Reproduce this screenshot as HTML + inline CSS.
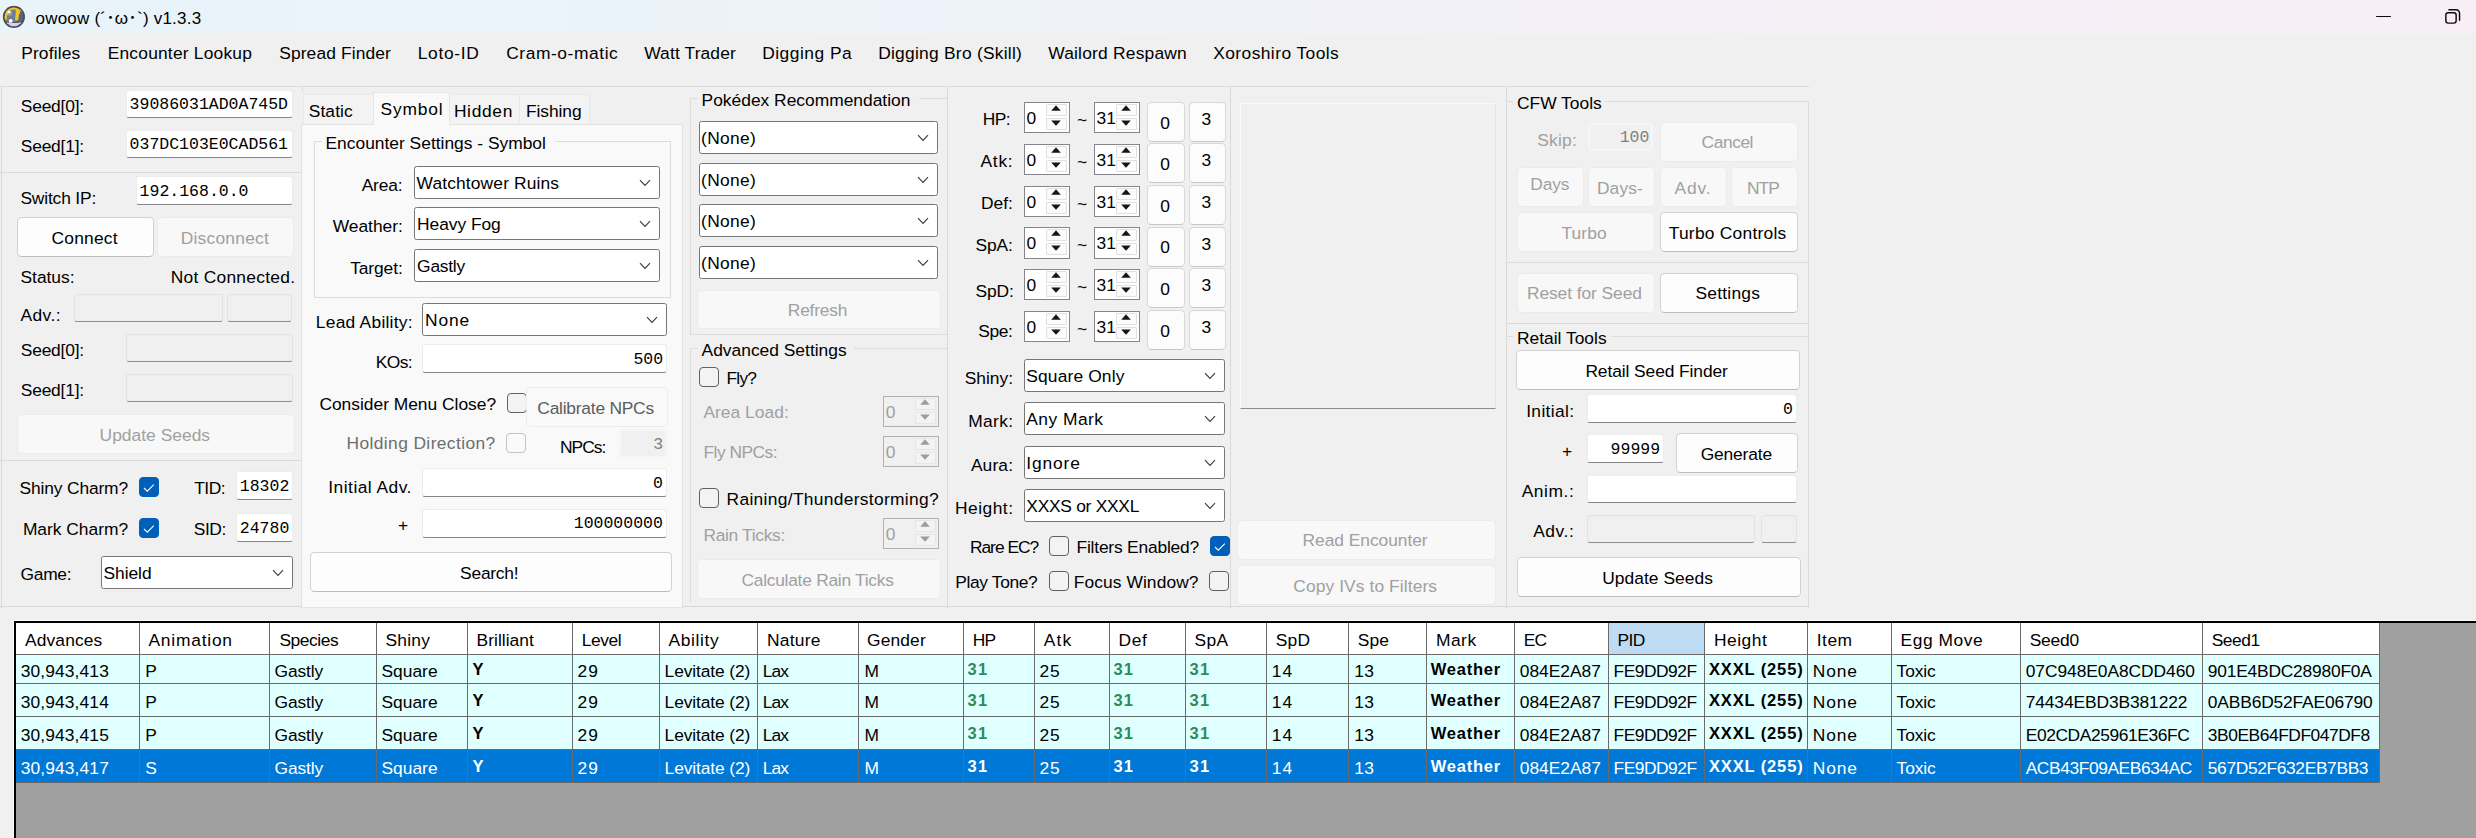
<!DOCTYPE html>
<html lang="en"><head><meta charset="utf-8"><title>owoow v1.3.3</title>
<style>
html,body{margin:0;padding:0;}
body{width:2476px;height:838px;overflow:hidden;background:#f0f0f0;position:relative;font-family:"Liberation Sans","Noto Sans CJK JP",sans-serif;font-size:17.4px;color:#000;}
body>div,.abs{position:absolute;box-sizing:border-box;}
.t,.m{line-height:24px;height:24px;white-space:nowrap;}
.m{font-family:"Liberation Mono",monospace;font-size:16.5px;}
.titlebar{left:0;top:0;width:2476px;height:34px;background:linear-gradient(90deg,#e8f4f9 0%,#ecf3f9 35%,#f4f0f7 65%,#f9eef6 100%);}
.tb{background:#fff;border:1px solid #ececec;border-bottom:1px solid #868686;border-radius:3px;}
.tb.flat{background:#f0f0f0;border:1px solid #f3f3f3;box-shadow:inset 0 0 0 1px #f9f9f9;border-radius:3px;}
.tb.dis{background:#f0f0f0;border-color:#e2e2e2;border-bottom-color:#8e8e8e;}
.cb{background:#fff;border:1px solid #767676;border-radius:2.5px;}
.cb .chev{position:absolute;right:7.6px;top:50%;margin-top:-3.2px;}
.bt{background:#fdfdfd;border:1px solid #d2d2d2;border-bottom-color:#bdbdbd;border-radius:4.5px;}
.bt.dis{background:#f8f8f8;border-color:#ebebeb;}
.bt.dis.onpane{background:#f9f9f9;border-color:#ececec;}
.bt.lt{background:#fcfcfc;border-color:#d8d8d8;border-bottom-color:#c8c8c8;}
.ck{border:1px solid #616161;border-radius:4px;background:#f3f3f3;}
.ck.on{background:#005fb8;border-color:#005fb8;}
.ck.on svg{position:absolute;left:-1px;top:-1px;}
.ck.cdis{border-color:#c3c3c3;background:#fafafa;}
.sp{border:1px solid #7a7a7a;background:#fff;}
.sb{position:absolute;background:#fcfcfc;border:1px solid #e0e0e0;border-radius:1px;box-sizing:border-box;overflow:hidden;}
.sb svg{margin:-1px 0 0 -1px;}
.gb{border:1px solid #dcdcdc;}
.pane{background:#f9f9f9;border:1px solid #e3e3e3;}
.tab{background:#f3f3f3;border:1px solid #e9e9e9;border-bottom:none;}
.tab.sel{background:#f9f9f9;border-color:#e6e6e6;}
.pic{background:#f0f0f0;border:1px solid #fafafa;border-right-color:#e6e6e6;border-bottom:1px solid #8c8c8c;}
.grid{background:#a0a0a0;border-top:2px solid #000;border-left:2px solid #000;}
.hd{background:#fff;}
.hdsel{background:#bddcf4;}
.rw{background:#e0ffff;}
.rsel{background:#0078d7;}
</style></head>
<body>
<div class="titlebar"></div>
<svg class="abs" style="left:1px;top:4px" width="26" height="26" viewBox="0 0 26 26">
<defs><clipPath id="bc"><circle cx="12.9" cy="12.85" r="9.3"/></clipPath></defs>
<circle cx="12.9" cy="12.85" r="11.9" fill="#f4fafc"/>
<circle cx="12.9" cy="12.85" r="11.1" fill="#4b4e53"/>
<g clip-path="url(#bc)">
<rect x="0" y="0" width="26" height="26" fill="#6c7f91"/>
<path d="M18.4 5 L26 5 L26 20 L17.2 20 Z" fill="#56656f"/>
<path d="M2 16.4 C2 7 6 3 13 3 C17.5 3 21 4.8 23.6 8.4 L21 8.4 C18.8 6 16.4 5.4 13 5.4 C8.4 5.4 6 8.6 5.6 16.4 Z" fill="#f3c41f"/>
<path d="M14.8 5 L18.6 5.4 L19 9 L17.8 11.2 L17.2 16 L14 16.4 L14.6 10.8 Z" fill="#f3c41f"/>
<path d="M0 14.8 C7 18.6 19 18.6 26 14.8 L26 19 L0 19 Z" fill="#4f5b65"/>
<path d="M0 16.6 C7 19.8 19 19.8 26 16.6 L26 26 L0 26 Z" fill="#dccbf4"/>
<path d="M3 20.8 C8 24 18 24 23 20.8 L20 23.6 L6 23.6 Z" fill="#b7a7d2"/>
<circle cx="9.7" cy="16.9" r="1.95" fill="#fff"/>
<ellipse cx="8.1" cy="8.1" rx="1.5" ry="1.3" fill="#fff"/>
<ellipse cx="8.6" cy="9.2" rx="2.6" ry="2.6" fill="#fff" opacity=".25"/>
</g></svg>
<div class="t" style="top:7px;left:35.5px;font-size:17px;letter-spacing:0.21px;">owoow (´･ω･`) v1.3.3</div>
<div class="ln" style="left:2376px;top:15.9px;width:15.2px;height:1.35px;background:#0c0c0c;border-radius:1px"></div>
<svg class="abs" style="left:2443px;top:7px" width="20" height="20" viewBox="0 0 20 20">
<rect x="2.85" y="5.8" width="10.3" height="10.3" rx="2.3" fill="none" stroke="#0c0c0c" stroke-width="1.45"/>
<path d="M5.9 2.7 H13 A3.55 3.55 0 0 1 16.55 6.25 V13.2" fill="none" stroke="#0c0c0c" stroke-width="1.45" stroke-linecap="round"/></svg>
<div class="t" style="top:41px;left:21.2px;letter-spacing:0.14px;">Profiles</div>
<div class="t" style="top:41px;left:107.7px;letter-spacing:0.2px;">Encounter Lookup</div>
<div class="t" style="top:41px;left:279.2px;letter-spacing:0.12px;">Spread Finder</div>
<div class="t" style="top:41px;left:417.7px;letter-spacing:0.68px;">Loto-ID</div>
<div class="t" style="top:41px;left:506.2px;letter-spacing:0.57px;">Cram-o-matic</div>
<div class="t" style="top:41px;left:644.2px;letter-spacing:0.14px;">Watt Trader</div>
<div class="t" style="top:41px;left:762.2px;letter-spacing:0.5px;">Digging Pa</div>
<div class="t" style="top:41px;left:878.2px;letter-spacing:0.25px;">Digging Bro (Skill)</div>
<div class="t" style="top:41px;left:1048.2px;letter-spacing:0.21px;">Wailord Respawn</div>
<div class="t" style="top:41px;left:1213.2px;letter-spacing:0.43px;">Xoroshiro Tools</div>
<div class="ln" style="left:0px;top:86px;width:1809px;height:1px;background:#dadada"></div>
<div class="ln" style="left:1px;top:86px;width:1px;height:522px;background:#dadada"></div>
<div class="ln" style="left:0px;top:172px;width:303px;height:1px;background:#dadada"></div>
<div class="ln" style="left:0px;top:460px;width:303px;height:1px;background:#dadada"></div>
<div class="ln" style="left:302px;top:86px;width:1px;height:6px;background:#dadada"></div>
<div class="ln" style="left:0px;top:606px;width:1809px;height:1px;background:#dadada"></div>
<div class="t" style="top:94px;left:20.8px;letter-spacing:-0.21px;">Seed[0]:</div>
<div class="tb" style="left:126px;top:90px;width:167px;height:28px;"></div>
<div class="m" style="top:93px;left:129.6px;color:#000;">39086031AD0A745D</div>
<div class="t" style="top:134px;left:20.8px;letter-spacing:-0.21px;">Seed[1]:</div>
<div class="tb" style="left:126px;top:130px;width:167px;height:28px;"></div>
<div class="m" style="top:133px;left:129.6px;color:#000;">037DC103E0CAD561</div>
<div class="t" style="top:186px;left:20.4px;letter-spacing:-0.16px;">Switch IP:</div>
<div class="tb" style="left:136px;top:176px;width:157px;height:29px;"></div>
<div class="m" style="top:180px;left:139.6px;color:#000;">192.168.0.0</div>
<div class="bt " style="left:17px;top:217px;width:137px;height:40px;"></div>
<div class="t" style="top:226px;left:51.6px;color:#000;letter-spacing:0.19px;">Connect</div>
<div class="bt dis " style="left:157px;top:217px;width:137px;height:40px;"></div>
<div class="t" style="top:226px;left:180.7px;color:#a0a0a0;letter-spacing:0.23px;">Disconnect</div>
<div class="t" style="top:265px;left:20.5px;letter-spacing:-0.02px;">Status:</div>
<div class="t" style="top:265px;left:170.7px;letter-spacing:0.27px;">Not Connected.</div>
<div class="t" style="top:303px;left:20.5px;letter-spacing:0.41px;">Adv.:</div>
<div class="tb dis" style="left:74px;top:294px;width:149px;height:28px;"></div>
<div class="tb dis" style="left:227px;top:294px;width:65px;height:28px;"></div>
<div class="t" style="top:338px;left:20.8px;letter-spacing:-0.21px;">Seed[0]:</div>
<div class="tb dis" style="left:126px;top:334px;width:167px;height:28px;"></div>
<div class="t" style="top:378px;left:20.8px;letter-spacing:-0.21px;">Seed[1]:</div>
<div class="tb dis" style="left:126px;top:374px;width:167px;height:28px;"></div>
<div class="bt dis " style="left:17px;top:414px;width:278px;height:40px;"></div>
<div class="t" style="top:423px;left:99.6px;color:#a0a0a0;letter-spacing:0.02px;">Update Seeds</div>
<div class="t" style="top:476px;left:19.6px;letter-spacing:-0.15px;">Shiny Charm?</div>
<div class="ck on" style="left:139px;top:477px;width:20px;height:20px;"><svg width="20" height="20" viewBox="0 0 20 20"><path d="M5 11 L8.3 14.2 L14.8 7.6" fill="none" stroke="#fff" stroke-width="1.05"/></svg></div>
<div class="t" style="top:476px;left:194.3px;letter-spacing:-0.55px;">TID:</div>
<div class="tb" style="left:236px;top:471px;width:57px;height:29px;"></div>
<div class="m" style="top:475px;left:239.8px;color:#000;">18302</div>
<div class="t" style="top:517px;left:22.9px;letter-spacing:-0.01px;">Mark Charm?</div>
<div class="ck on" style="left:139px;top:518px;width:20px;height:20px;"><svg width="20" height="20" viewBox="0 0 20 20"><path d="M5 11 L8.3 14.2 L14.8 7.6" fill="none" stroke="#fff" stroke-width="1.05"/></svg></div>
<div class="t" style="top:517px;left:193.8px;letter-spacing:-0.44px;">SID:</div>
<div class="tb" style="left:236px;top:513px;width:57px;height:29px;"></div>
<div class="m" style="top:517px;left:239.8px;color:#000;">24780</div>
<div class="t" style="top:562px;left:20.6px;letter-spacing:-0.33px;">Game:</div>
<div class="cb" style="left:101px;top:556px;width:192px;height:33px;"><svg class="chev" width="12" height="8" viewBox="0 0 12 8"><path d="M1 1.2 L6 6.4 L11 1.2" fill="none" stroke="#3c3c3c" stroke-width="1.15"/></svg></div>
<div class="t" style="top:561px;left:103.6px;letter-spacing:-0.07px;">Shield</div>
<div class="pane" style="left:301px;top:124px;width:382px;height:484px;"></div>
<div class="tab" style="left:303px;top:94px;width:72px;height:30px;"></div>
<div class="tab" style="left:449px;top:94px;width:71px;height:30px;"></div>
<div class="tab" style="left:519px;top:94px;width:71px;height:30px;"></div>
<div class="tab sel" style="left:373px;top:92px;width:77px;height:33px;"></div>
<div class="t" style="top:99px;left:308.7px;letter-spacing:0.12px;">Static</div>
<div class="t" style="top:97px;left:380.6px;letter-spacing:0.8px;">Symbol</div>
<div class="t" style="top:99px;left:453.9px;letter-spacing:0.66px;">Hidden</div>
<div class="t" style="top:99px;left:526px;letter-spacing:-0.08px;">Fishing</div>
<div class="gb" style="left:314px;top:141px;width:357px;height:157px;"></div>
<div class="ln" style="left:321.5px;top:140.2px;width:234.4px;height:3px;background:#f9f9f9"></div>
<div class="t" style="top:131px;left:325.5px;">Encounter Settings - Symbol</div>
<div class="t" style="top:173px;left:361.7px;letter-spacing:-0.17px;">Area:</div>
<div class="cb" style="left:414px;top:166px;width:246px;height:33px;"><svg class="chev" width="12" height="8" viewBox="0 0 12 8"><path d="M1 1.2 L6 6.4 L11 1.2" fill="none" stroke="#3c3c3c" stroke-width="1.15"/></svg></div>
<div class="t" style="top:171px;left:416.5px;letter-spacing:0.14px;">Watchtower Ruins</div>
<div class="t" style="top:214px;left:332.8px;letter-spacing:-0.04px;">Weather:</div>
<div class="cb" style="left:414px;top:207px;width:246px;height:33px;"><svg class="chev" width="12" height="8" viewBox="0 0 12 8"><path d="M1 1.2 L6 6.4 L11 1.2" fill="none" stroke="#3c3c3c" stroke-width="1.15"/></svg></div>
<div class="t" style="top:212px;left:417.1px;letter-spacing:-0.05px;">Heavy Fog</div>
<div class="t" style="top:256px;left:350.2px;letter-spacing:-0.1px;">Target:</div>
<div class="cb" style="left:414px;top:249px;width:246px;height:33px;"><svg class="chev" width="12" height="8" viewBox="0 0 12 8"><path d="M1 1.2 L6 6.4 L11 1.2" fill="none" stroke="#3c3c3c" stroke-width="1.15"/></svg></div>
<div class="t" style="top:254px;left:417.1px;letter-spacing:-0.24px;">Gastly</div>
<div class="t" style="top:310px;left:315.8px;letter-spacing:0.25px;">Lead Ability:</div>
<div class="cb" style="left:422px;top:303px;width:245px;height:33px;"><svg class="chev" width="12" height="8" viewBox="0 0 12 8"><path d="M1 1.2 L6 6.4 L11 1.2" fill="none" stroke="#3c3c3c" stroke-width="1.15"/></svg></div>
<div class="t" style="top:308px;left:425.1px;letter-spacing:0.81px;">None</div>
<div class="t" style="top:350px;left:375.8px;letter-spacing:-0.62px;">KOs:</div>
<div class="tb" style="left:422px;top:344px;width:245px;height:29px;"></div>
<div class="m" style="top:348px;left:63.1px;width:600px;text-align:right;color:#000;">500</div>
<div class="t" style="top:392px;left:319.4px;letter-spacing:-0.01px;">Consider Menu Close?</div>
<div class="ck" style="left:507px;top:393px;width:20px;height:20px;"></div>
<div class="bt dis onpane" style="left:526px;top:387px;width:142px;height:40px;"></div>
<div class="t" style="top:396px;left:537.3px;color:#5d5d5d;letter-spacing:-0.23px;">Calibrate NPCs</div>
<div class="t" style="top:431px;left:346.5px;color:#6d6d6d;letter-spacing:0.39px;">Holding Direction?</div>
<div class="ck cdis" style="left:506px;top:433px;width:20px;height:20px;"></div>
<div class="t" style="top:435px;left:559.9px;letter-spacing:-0.94px;">NPCs:</div>
<div class="tb flat" style="left:619px;top:429px;width:48px;height:29px;"></div>
<div class="m" style="top:433px;left:63.2px;width:600px;text-align:right;color:#808080;">3</div>
<div class="t" style="top:475px;left:328.3px;letter-spacing:0.47px;">Initial Adv.</div>
<div class="tb" style="left:422px;top:468px;width:245px;height:29px;"></div>
<div class="m" style="top:472px;left:62.9px;width:600px;text-align:right;color:#000;">0</div>
<div class="t" style="top:513px;left:103px;width:600px;text-align:center;">+</div>
<div class="tb" style="left:422px;top:509px;width:245px;height:29px;"></div>
<div class="m" style="top:512px;left:62.9px;width:600px;text-align:right;color:#000;">100000000</div>
<div class="bt " style="left:310px;top:552px;width:362px;height:40px;"></div>
<div class="t" style="top:561px;left:460.1px;color:#000;letter-spacing:-0.24px;">Search!</div>
<div class="gb" style="left:690px;top:98px;width:258px;height:237px;border-right:none;"></div>
<div class="ln" style="left:697.6px;top:97.6px;width:221.2px;height:3px;background:#f0f0f0"></div>
<div class="t" style="top:88px;left:701.6px;">Pokédex Recommendation</div>
<div class="cb" style="left:699px;top:121px;width:239px;height:33px;"><svg class="chev" width="12" height="8" viewBox="0 0 12 8"><path d="M1 1.2 L6 6.4 L11 1.2" fill="none" stroke="#3c3c3c" stroke-width="1.15"/></svg></div>
<div class="t" style="top:126px;left:701.1px;letter-spacing:0.33px;">(None)</div>
<div class="cb" style="left:699px;top:163px;width:239px;height:33px;"><svg class="chev" width="12" height="8" viewBox="0 0 12 8"><path d="M1 1.2 L6 6.4 L11 1.2" fill="none" stroke="#3c3c3c" stroke-width="1.15"/></svg></div>
<div class="t" style="top:168px;left:701.1px;letter-spacing:0.33px;">(None)</div>
<div class="cb" style="left:699px;top:204px;width:239px;height:33px;"><svg class="chev" width="12" height="8" viewBox="0 0 12 8"><path d="M1 1.2 L6 6.4 L11 1.2" fill="none" stroke="#3c3c3c" stroke-width="1.15"/></svg></div>
<div class="t" style="top:209px;left:701.1px;letter-spacing:0.33px;">(None)</div>
<div class="cb" style="left:699px;top:246px;width:239px;height:33px;"><svg class="chev" width="12" height="8" viewBox="0 0 12 8"><path d="M1 1.2 L6 6.4 L11 1.2" fill="none" stroke="#3c3c3c" stroke-width="1.15"/></svg></div>
<div class="t" style="top:251px;left:701.1px;letter-spacing:0.33px;">(None)</div>
<div class="bt dis " style="left:697px;top:290px;width:244px;height:39px;"></div>
<div class="t" style="top:298px;left:787.8px;color:#a0a0a0;letter-spacing:-0.22px;">Refresh</div>
<div class="gb" style="left:690px;top:348px;width:258px;height:254px;border-right:none;border-bottom:none;"></div>
<div class="ln" style="left:697.6px;top:347.4px;width:156px;height:3px;background:#f0f0f0"></div>
<div class="t" style="top:338px;left:701.6px;">Advanced Settings</div>
<div class="ck" style="left:699px;top:367px;width:20px;height:20px;"></div>
<div class="t" style="top:366px;left:726.6px;letter-spacing:-0.85px;">Fly?</div>
<div class="t" style="top:400px;left:703.4px;color:#a0a0a0;letter-spacing:0.03px;">Area Load:</div>
<div class="sp" style="left:883px;top:396px;width:56px;height:31px;border-color:#b0b0b5;background:#f0f0f0;"><div class="sb" style="left:31px;top:1px;width:21px;height:12px;background:#f3f3f3;border-color:#e6e6e6;"><svg width="21" height="12" viewBox="0 0 21 12" style="position:absolute;left:0;top:0"><path d="M5.2 6.7 L10 1.3 L14.8 6.7 Z" fill="#9c9c9c"/></svg></div><div class="sb" style="left:31px;top:14.5px;width:21px;height:12px;background:#f3f3f3;border-color:#e6e6e6;"><svg width="21" height="12" viewBox="0 0 21 12" style="position:absolute;left:0;top:0"><path d="M5.2 2.4 L10 7.8 L14.8 2.4 Z" fill="#9c9c9c"/></svg></div></div>
<div class="t" style="top:400px;left:885.7px;color:#a0a0a0;">0</div>
<div class="t" style="top:440px;left:703.4px;color:#a0a0a0;letter-spacing:-0.5px;">Fly NPCs:</div>
<div class="sp" style="left:883px;top:436px;width:56px;height:31px;border-color:#b0b0b5;background:#f0f0f0;"><div class="sb" style="left:31px;top:1px;width:21px;height:12px;background:#f3f3f3;border-color:#e6e6e6;"><svg width="21" height="12" viewBox="0 0 21 12" style="position:absolute;left:0;top:0"><path d="M5.2 6.7 L10 1.3 L14.8 6.7 Z" fill="#9c9c9c"/></svg></div><div class="sb" style="left:31px;top:14.5px;width:21px;height:12px;background:#f3f3f3;border-color:#e6e6e6;"><svg width="21" height="12" viewBox="0 0 21 12" style="position:absolute;left:0;top:0"><path d="M5.2 2.4 L10 7.8 L14.8 2.4 Z" fill="#9c9c9c"/></svg></div></div>
<div class="t" style="top:440px;left:885.7px;color:#a0a0a0;">0</div>
<div class="ck" style="left:699px;top:488px;width:20px;height:20px;"></div>
<div class="t" style="top:487px;left:726.6px;letter-spacing:0.31px;">Raining/Thunderstorming?</div>
<div class="t" style="top:523px;left:703.4px;color:#a0a0a0;letter-spacing:-0.31px;">Rain Ticks:</div>
<div class="sp" style="left:883px;top:518px;width:56px;height:31px;border-color:#b0b0b5;background:#f0f0f0;"><div class="sb" style="left:31px;top:1px;width:21px;height:12px;background:#f3f3f3;border-color:#e6e6e6;"><svg width="21" height="12" viewBox="0 0 21 12" style="position:absolute;left:0;top:0"><path d="M5.2 6.7 L10 1.3 L14.8 6.7 Z" fill="#9c9c9c"/></svg></div><div class="sb" style="left:31px;top:14.5px;width:21px;height:12px;background:#f3f3f3;border-color:#e6e6e6;"><svg width="21" height="12" viewBox="0 0 21 12" style="position:absolute;left:0;top:0"><path d="M5.2 2.4 L10 7.8 L14.8 2.4 Z" fill="#9c9c9c"/></svg></div></div>
<div class="t" style="top:522px;left:885.7px;color:#a0a0a0;">0</div>
<div class="bt dis " style="left:697px;top:559px;width:244px;height:40px;"></div>
<div class="t" style="top:568px;left:741.5px;color:#a0a0a0;letter-spacing:-0.27px;">Calculate Rain Ticks</div>
<div class="ln" style="left:947px;top:86px;width:1px;height:522px;background:#dadada"></div>
<div class="t" style="top:107px;left:982.7px;letter-spacing:-0.6px;">HP:</div>
<div class="sp" style="left:1024px;top:102px;width:46px;height:31px;border-color:#85858c;background:#fff;"><div class="sb" style="left:21px;top:1px;width:21px;height:12px;"><svg width="21" height="12" viewBox="0 0 21 12" style="position:absolute;left:0;top:0"><path d="M5.2 6.7 L10 1.3 L14.8 6.7 Z" fill="#161616"/></svg></div><div class="sb" style="left:21px;top:14.5px;width:21px;height:12px;"><svg width="21" height="12" viewBox="0 0 21 12" style="position:absolute;left:0;top:0"><path d="M5.2 2.4 L10 7.8 L14.8 2.4 Z" fill="#161616"/></svg></div></div>
<div class="t" style="top:106px;left:1026.6px;color:#000;">0</div>
<div class="t" style="top:108px;left:782.2px;width:600px;text-align:center;">~</div>
<div class="sp" style="left:1094px;top:102px;width:46px;height:31px;border-color:#85858c;background:#fff;"><div class="sb" style="left:21px;top:1px;width:21px;height:12px;"><svg width="21" height="12" viewBox="0 0 21 12" style="position:absolute;left:0;top:0"><path d="M5.2 6.7 L10 1.3 L14.8 6.7 Z" fill="#161616"/></svg></div><div class="sb" style="left:21px;top:14.5px;width:21px;height:12px;"><svg width="21" height="12" viewBox="0 0 21 12" style="position:absolute;left:0;top:0"><path d="M5.2 2.4 L10 7.8 L14.8 2.4 Z" fill="#161616"/></svg></div></div>
<div class="t" style="top:106px;left:1096.6px;color:#000;">31</div>
<div class="bt lt" style="left:1147px;top:102px;width:38px;height:40px;"></div>
<div class="t" style="top:111px;left:865.2px;width:600px;text-align:center;color:#000;">0</div>
<div class="bt lt" style="left:1189px;top:102px;width:37px;height:40px;"></div>
<div class="t" style="top:107px;left:906.4px;width:600px;text-align:center;color:#000;">3</div>
<div class="t" style="top:149px;left:980.5px;letter-spacing:0.74px;">Atk:</div>
<div class="sp" style="left:1024px;top:144px;width:46px;height:31px;border-color:#85858c;background:#fff;"><div class="sb" style="left:21px;top:1px;width:21px;height:12px;"><svg width="21" height="12" viewBox="0 0 21 12" style="position:absolute;left:0;top:0"><path d="M5.2 6.7 L10 1.3 L14.8 6.7 Z" fill="#161616"/></svg></div><div class="sb" style="left:21px;top:14.5px;width:21px;height:12px;"><svg width="21" height="12" viewBox="0 0 21 12" style="position:absolute;left:0;top:0"><path d="M5.2 2.4 L10 7.8 L14.8 2.4 Z" fill="#161616"/></svg></div></div>
<div class="t" style="top:148px;left:1026.6px;color:#000;">0</div>
<div class="t" style="top:150px;left:782.2px;width:600px;text-align:center;">~</div>
<div class="sp" style="left:1094px;top:144px;width:46px;height:31px;border-color:#85858c;background:#fff;"><div class="sb" style="left:21px;top:1px;width:21px;height:12px;"><svg width="21" height="12" viewBox="0 0 21 12" style="position:absolute;left:0;top:0"><path d="M5.2 6.7 L10 1.3 L14.8 6.7 Z" fill="#161616"/></svg></div><div class="sb" style="left:21px;top:14.5px;width:21px;height:12px;"><svg width="21" height="12" viewBox="0 0 21 12" style="position:absolute;left:0;top:0"><path d="M5.2 2.4 L10 7.8 L14.8 2.4 Z" fill="#161616"/></svg></div></div>
<div class="t" style="top:148px;left:1096.6px;color:#000;">31</div>
<div class="bt lt" style="left:1147px;top:143px;width:38px;height:40px;"></div>
<div class="t" style="top:152px;left:865.2px;width:600px;text-align:center;color:#000;">0</div>
<div class="bt lt" style="left:1189px;top:143px;width:37px;height:40px;"></div>
<div class="t" style="top:148px;left:906.4px;width:600px;text-align:center;color:#000;">3</div>
<div class="t" style="top:191px;left:981.1px;letter-spacing:-0.07px;">Def:</div>
<div class="sp" style="left:1024px;top:186px;width:46px;height:31px;border-color:#85858c;background:#fff;"><div class="sb" style="left:21px;top:1px;width:21px;height:12px;"><svg width="21" height="12" viewBox="0 0 21 12" style="position:absolute;left:0;top:0"><path d="M5.2 6.7 L10 1.3 L14.8 6.7 Z" fill="#161616"/></svg></div><div class="sb" style="left:21px;top:14.5px;width:21px;height:12px;"><svg width="21" height="12" viewBox="0 0 21 12" style="position:absolute;left:0;top:0"><path d="M5.2 2.4 L10 7.8 L14.8 2.4 Z" fill="#161616"/></svg></div></div>
<div class="t" style="top:190px;left:1026.6px;color:#000;">0</div>
<div class="t" style="top:192px;left:782.2px;width:600px;text-align:center;">~</div>
<div class="sp" style="left:1094px;top:186px;width:46px;height:31px;border-color:#85858c;background:#fff;"><div class="sb" style="left:21px;top:1px;width:21px;height:12px;"><svg width="21" height="12" viewBox="0 0 21 12" style="position:absolute;left:0;top:0"><path d="M5.2 6.7 L10 1.3 L14.8 6.7 Z" fill="#161616"/></svg></div><div class="sb" style="left:21px;top:14.5px;width:21px;height:12px;"><svg width="21" height="12" viewBox="0 0 21 12" style="position:absolute;left:0;top:0"><path d="M5.2 2.4 L10 7.8 L14.8 2.4 Z" fill="#161616"/></svg></div></div>
<div class="t" style="top:190px;left:1096.6px;color:#000;">31</div>
<div class="bt lt" style="left:1147px;top:185px;width:38px;height:40px;"></div>
<div class="t" style="top:194px;left:865.2px;width:600px;text-align:center;color:#000;">0</div>
<div class="bt lt" style="left:1189px;top:185px;width:37px;height:40px;"></div>
<div class="t" style="top:190px;left:906.4px;width:600px;text-align:center;color:#000;">3</div>
<div class="t" style="top:233px;left:975.6px;letter-spacing:-0.17px;">SpA:</div>
<div class="sp" style="left:1024px;top:227px;width:46px;height:32px;border-color:#85858c;background:#fff;"><div class="sb" style="left:21px;top:1px;width:21px;height:12px;"><svg width="21" height="12" viewBox="0 0 21 12" style="position:absolute;left:0;top:0"><path d="M5.2 6.7 L10 1.3 L14.8 6.7 Z" fill="#161616"/></svg></div><div class="sb" style="left:21px;top:14.5px;width:21px;height:12px;"><svg width="21" height="12" viewBox="0 0 21 12" style="position:absolute;left:0;top:0"><path d="M5.2 2.4 L10 7.8 L14.8 2.4 Z" fill="#161616"/></svg></div></div>
<div class="t" style="top:231px;left:1026.6px;color:#000;">0</div>
<div class="t" style="top:233px;left:782.2px;width:600px;text-align:center;">~</div>
<div class="sp" style="left:1094px;top:227px;width:46px;height:32px;border-color:#85858c;background:#fff;"><div class="sb" style="left:21px;top:1px;width:21px;height:12px;"><svg width="21" height="12" viewBox="0 0 21 12" style="position:absolute;left:0;top:0"><path d="M5.2 6.7 L10 1.3 L14.8 6.7 Z" fill="#161616"/></svg></div><div class="sb" style="left:21px;top:14.5px;width:21px;height:12px;"><svg width="21" height="12" viewBox="0 0 21 12" style="position:absolute;left:0;top:0"><path d="M5.2 2.4 L10 7.8 L14.8 2.4 Z" fill="#161616"/></svg></div></div>
<div class="t" style="top:231px;left:1096.6px;color:#000;">31</div>
<div class="bt lt" style="left:1147px;top:227px;width:38px;height:40px;"></div>
<div class="t" style="top:235px;left:865.2px;width:600px;text-align:center;color:#000;">0</div>
<div class="bt lt" style="left:1189px;top:227px;width:37px;height:40px;"></div>
<div class="t" style="top:232px;left:906.4px;width:600px;text-align:center;color:#000;">3</div>
<div class="t" style="top:279px;left:975.6px;letter-spacing:-0.16px;">SpD:</div>
<div class="sp" style="left:1024px;top:269px;width:46px;height:31px;border-color:#85858c;background:#fff;"><div class="sb" style="left:21px;top:1px;width:21px;height:12px;"><svg width="21" height="12" viewBox="0 0 21 12" style="position:absolute;left:0;top:0"><path d="M5.2 6.7 L10 1.3 L14.8 6.7 Z" fill="#161616"/></svg></div><div class="sb" style="left:21px;top:14.5px;width:21px;height:12px;"><svg width="21" height="12" viewBox="0 0 21 12" style="position:absolute;left:0;top:0"><path d="M5.2 2.4 L10 7.8 L14.8 2.4 Z" fill="#161616"/></svg></div></div>
<div class="t" style="top:273px;left:1026.6px;color:#000;">0</div>
<div class="t" style="top:275px;left:782.2px;width:600px;text-align:center;">~</div>
<div class="sp" style="left:1094px;top:269px;width:46px;height:31px;border-color:#85858c;background:#fff;"><div class="sb" style="left:21px;top:1px;width:21px;height:12px;"><svg width="21" height="12" viewBox="0 0 21 12" style="position:absolute;left:0;top:0"><path d="M5.2 6.7 L10 1.3 L14.8 6.7 Z" fill="#161616"/></svg></div><div class="sb" style="left:21px;top:14.5px;width:21px;height:12px;"><svg width="21" height="12" viewBox="0 0 21 12" style="position:absolute;left:0;top:0"><path d="M5.2 2.4 L10 7.8 L14.8 2.4 Z" fill="#161616"/></svg></div></div>
<div class="t" style="top:273px;left:1096.6px;color:#000;">31</div>
<div class="bt lt" style="left:1147px;top:268px;width:38px;height:40px;"></div>
<div class="t" style="top:277px;left:865.2px;width:600px;text-align:center;color:#000;">0</div>
<div class="bt lt" style="left:1189px;top:268px;width:37px;height:40px;"></div>
<div class="t" style="top:273px;left:906.4px;width:600px;text-align:center;color:#000;">3</div>
<div class="t" style="top:319px;left:978.2px;letter-spacing:-0.39px;">Spe:</div>
<div class="sp" style="left:1024px;top:311px;width:46px;height:31px;border-color:#85858c;background:#fff;"><div class="sb" style="left:21px;top:1px;width:21px;height:12px;"><svg width="21" height="12" viewBox="0 0 21 12" style="position:absolute;left:0;top:0"><path d="M5.2 6.7 L10 1.3 L14.8 6.7 Z" fill="#161616"/></svg></div><div class="sb" style="left:21px;top:14.5px;width:21px;height:12px;"><svg width="21" height="12" viewBox="0 0 21 12" style="position:absolute;left:0;top:0"><path d="M5.2 2.4 L10 7.8 L14.8 2.4 Z" fill="#161616"/></svg></div></div>
<div class="t" style="top:315px;left:1026.6px;color:#000;">0</div>
<div class="t" style="top:317px;left:782.2px;width:600px;text-align:center;">~</div>
<div class="sp" style="left:1094px;top:311px;width:46px;height:31px;border-color:#85858c;background:#fff;"><div class="sb" style="left:21px;top:1px;width:21px;height:12px;"><svg width="21" height="12" viewBox="0 0 21 12" style="position:absolute;left:0;top:0"><path d="M5.2 6.7 L10 1.3 L14.8 6.7 Z" fill="#161616"/></svg></div><div class="sb" style="left:21px;top:14.5px;width:21px;height:12px;"><svg width="21" height="12" viewBox="0 0 21 12" style="position:absolute;left:0;top:0"><path d="M5.2 2.4 L10 7.8 L14.8 2.4 Z" fill="#161616"/></svg></div></div>
<div class="t" style="top:315px;left:1096.6px;color:#000;">31</div>
<div class="bt lt" style="left:1147px;top:310px;width:38px;height:40px;"></div>
<div class="t" style="top:319px;left:865.2px;width:600px;text-align:center;color:#000;">0</div>
<div class="bt lt" style="left:1189px;top:310px;width:37px;height:40px;"></div>
<div class="t" style="top:315px;left:906.4px;width:600px;text-align:center;color:#000;">3</div>
<div class="t" style="top:366px;left:964.7px;letter-spacing:-0.01px;">Shiny:</div>
<div class="t" style="top:409px;left:968.2px;letter-spacing:0.33px;">Mark:</div>
<div class="t" style="top:453px;left:970.9px;letter-spacing:0.13px;">Aura:</div>
<div class="t" style="top:496px;left:955px;letter-spacing:0.48px;">Height:</div>
<div class="cb" style="left:1024px;top:359px;width:201px;height:33px;"><svg class="chev" width="12" height="8" viewBox="0 0 12 8"><path d="M1 1.2 L6 6.4 L11 1.2" fill="none" stroke="#3c3c3c" stroke-width="1.15"/></svg></div>
<div class="t" style="top:364px;left:1026.3px;letter-spacing:0.14px;">Square Only</div>
<div class="cb" style="left:1024px;top:402px;width:201px;height:33px;"><svg class="chev" width="12" height="8" viewBox="0 0 12 8"><path d="M1 1.2 L6 6.4 L11 1.2" fill="none" stroke="#3c3c3c" stroke-width="1.15"/></svg></div>
<div class="t" style="top:407px;left:1026.3px;letter-spacing:0.46px;">Any Mark</div>
<div class="cb" style="left:1024px;top:446px;width:201px;height:33px;"><svg class="chev" width="12" height="8" viewBox="0 0 12 8"><path d="M1 1.2 L6 6.4 L11 1.2" fill="none" stroke="#3c3c3c" stroke-width="1.15"/></svg></div>
<div class="t" style="top:451px;left:1026.3px;letter-spacing:0.84px;">Ignore</div>
<div class="cb" style="left:1024px;top:489px;width:201px;height:33px;"><svg class="chev" width="12" height="8" viewBox="0 0 12 8"><path d="M1 1.2 L6 6.4 L11 1.2" fill="none" stroke="#3c3c3c" stroke-width="1.15"/></svg></div>
<div class="t" style="top:494px;left:1026.3px;letter-spacing:-0.27px;">XXXS or XXXL</div>
<div class="t" style="top:535px;left:969.9px;letter-spacing:-1px;">Rare EC?</div>
<div class="ck" style="left:1049px;top:536px;width:20px;height:20px;"></div>
<div class="t" style="top:535px;left:1076.5px;letter-spacing:-0.2px;">Filters Enabled?</div>
<div class="ck on" style="left:1210px;top:536px;width:20px;height:20px;"><svg width="20" height="20" viewBox="0 0 20 20"><path d="M5 11 L8.3 14.2 L14.8 7.6" fill="none" stroke="#fff" stroke-width="1.05"/></svg></div>
<div class="t" style="top:570px;left:955.2px;letter-spacing:-0.35px;">Play Tone?</div>
<div class="ck" style="left:1049px;top:571px;width:20px;height:20px;"></div>
<div class="t" style="top:570px;left:1073.7px;letter-spacing:0.09px;">Focus Window?</div>
<div class="ck" style="left:1209px;top:571px;width:20px;height:20px;"></div>
<div class="ln" style="left:1230px;top:86px;width:1px;height:522px;background:#dadada"></div>
<div class="pic" style="left:1240px;top:103px;width:256px;height:306px;"></div>
<div class="bt dis " style="left:1237px;top:520px;width:259px;height:40px;"></div>
<div class="t" style="top:528px;left:1302.6px;color:#a0a0a0;letter-spacing:-0.05px;">Read Encounter</div>
<div class="bt dis " style="left:1237px;top:565px;width:259px;height:40px;"></div>
<div class="t" style="top:574px;left:1293.3px;color:#a0a0a0;letter-spacing:0.09px;">Copy IVs to Filters</div>
<div class="ln" style="left:1506px;top:86px;width:1px;height:522px;background:#dadada"></div>
<div class="ln" style="left:1808px;top:101px;width:1px;height:507px;background:#dadada"></div>
<div class="gb" style="left:1506px;top:101px;width:303px;height:162px;border-left:none;border-right:none;"></div>
<div class="ln" style="left:1513px;top:100.6px;width:91.6px;height:3px;background:#f0f0f0"></div>
<div class="t" style="top:91px;left:1517px;">CFW Tools</div>
<div class="t" style="top:128px;left:1537.2px;color:#a0a0a0;letter-spacing:0.23px;">Skip:</div>
<div class="tb flat" style="left:1588px;top:123px;width:65px;height:28px;"></div>
<div class="m" style="top:126px;left:1049.4px;width:600px;text-align:right;color:#808080;">100</div>
<div class="bt dis " style="left:1660px;top:122px;width:138px;height:40px;"></div>
<div class="t" style="top:130px;left:1701.6px;color:#a0a0a0;letter-spacing:-0.45px;">Cancel</div>
<div class="bt dis " style="left:1517px;top:167px;width:67px;height:40px;"></div>
<div class="t" style="top:172px;left:1530.2px;color:#a0a0a0;letter-spacing:-0.11px;">Days</div>
<div class="bt dis " style="left:1588px;top:167px;width:67px;height:40px;"></div>
<div class="t" style="top:176px;left:1596.9px;color:#a0a0a0;letter-spacing:0.14px;">Days-</div>
<div class="bt dis " style="left:1660px;top:167px;width:67px;height:40px;"></div>
<div class="t" style="top:176px;left:1674.5px;color:#a0a0a0;letter-spacing:0.86px;">Adv.</div>
<div class="bt dis " style="left:1731px;top:167px;width:67px;height:40px;"></div>
<div class="t" style="top:176px;left:1747px;color:#a0a0a0;letter-spacing:-1px;">NTP</div>
<div class="bt dis " style="left:1517px;top:212px;width:138px;height:40px;"></div>
<div class="t" style="top:221px;left:1561.4px;color:#a0a0a0;letter-spacing:0.15px;">Turbo</div>
<div class="bt " style="left:1660px;top:212px;width:138px;height:40px;"></div>
<div class="t" style="top:221px;left:1668.7px;color:#000;letter-spacing:0.25px;">Turbo Controls</div>
<div class="bt dis " style="left:1517px;top:273px;width:138px;height:40px;"></div>
<div class="t" style="top:281px;left:1526.9px;color:#a0a0a0;letter-spacing:-0.07px;">Reset for Seed</div>
<div class="bt " style="left:1660px;top:273px;width:138px;height:40px;"></div>
<div class="t" style="top:281px;left:1695.5px;color:#000;letter-spacing:0.22px;">Settings</div>
<div class="ln" style="left:1506px;top:323px;width:303px;height:1px;background:#dadada"></div>
<div class="gb" style="left:1506px;top:336px;width:303px;height:271px;border-left:none;border-right:none;border-bottom:none;"></div>
<div class="ln" style="left:1513px;top:335.8px;width:97.6px;height:3px;background:#f0f0f0"></div>
<div class="t" style="top:326px;left:1517px;">Retail Tools</div>
<div class="bt " style="left:1516px;top:350px;width:284px;height:40px;"></div>
<div class="t" style="top:359px;left:1585.4px;color:#000;letter-spacing:-0.09px;">Retail Seed Finder</div>
<div class="t" style="top:399px;left:1526.2px;letter-spacing:0.35px;">Initial:</div>
<div class="tb" style="left:1587px;top:394px;width:210px;height:29px;"></div>
<div class="m" style="top:398px;left:1192.9px;width:600px;text-align:right;color:#000;">0</div>
<div class="t" style="top:439px;left:1267px;width:600px;text-align:center;">+</div>
<div class="tb" style="left:1587px;top:434px;width:77px;height:29px;"></div>
<div class="m" style="top:438px;left:1060.1px;width:600px;text-align:right;color:#000;">99999</div>
<div class="bt " style="left:1676px;top:433px;width:122px;height:40px;"></div>
<div class="t" style="top:442px;left:1700.7px;color:#000;letter-spacing:-0.16px;">Generate</div>
<div class="t" style="top:479px;left:1521.7px;letter-spacing:0.56px;">Anim.:</div>
<div class="tb" style="left:1587px;top:475px;width:210px;height:28px;"></div>
<div class="t" style="top:519px;left:1533.2px;letter-spacing:0.56px;">Adv.:</div>
<div class="tb dis" style="left:1587px;top:515px;width:168px;height:28px;"></div>
<div class="tb dis" style="left:1761px;top:515px;width:36px;height:28px;"></div>
<div class="bt " style="left:1517px;top:557px;width:284px;height:40px;"></div>
<div class="t" style="top:566px;left:1602.2px;color:#000;letter-spacing:0.05px;">Update Seeds</div>
<div class="ln" style="left:13px;top:620px;width:2464px;height:1px;background:#fbfbfb"></div>
<div class="ln" style="left:13px;top:620px;width:1px;height:219px;background:#fbfbfb"></div>
<div class="grid" style="left:14px;top:621px;width:2463px;height:218px;"></div>
<div class="hd" style="left:16px;top:623px;width:2364px;height:32px;"></div>
<div class="hdsel" style="left:1609px;top:623px;width:96px;height:32px;"></div>
<div class="rw" style="left:16px;top:655px;width:2364px;height:95px;"></div>
<div class="rsel" style="left:16px;top:750px;width:2364px;height:33px;"></div>
<div class="ln" style="left:16px;top:654px;width:2364px;height:1px;background:#6a6a6a"></div>
<div class="ln" style="left:16px;top:683px;width:2364px;height:1px;background:#6a6a6a"></div>
<div class="ln" style="left:16px;top:716px;width:2364px;height:1px;background:#6a6a6a"></div>
<div class="ln" style="left:16px;top:749px;width:2364px;height:1px;background:#6a6a6a"></div>
<div class="ln" style="left:16px;top:782px;width:2364px;height:1px;background:#6a6a6a"></div>
<div class="ln" style="left:139px;top:623px;width:1px;height:160px;background:#6a6a6a"></div>
<div class="ln" style="left:269px;top:623px;width:1px;height:160px;background:#6a6a6a"></div>
<div class="ln" style="left:376px;top:623px;width:1px;height:160px;background:#6a6a6a"></div>
<div class="ln" style="left:467px;top:623px;width:1px;height:160px;background:#6a6a6a"></div>
<div class="ln" style="left:572px;top:623px;width:1px;height:160px;background:#6a6a6a"></div>
<div class="ln" style="left:659px;top:623px;width:1px;height:160px;background:#6a6a6a"></div>
<div class="ln" style="left:757px;top:623px;width:1px;height:160px;background:#6a6a6a"></div>
<div class="ln" style="left:858px;top:623px;width:1px;height:160px;background:#6a6a6a"></div>
<div class="ln" style="left:963px;top:623px;width:1px;height:160px;background:#6a6a6a"></div>
<div class="ln" style="left:1034px;top:623px;width:1px;height:160px;background:#6a6a6a"></div>
<div class="ln" style="left:1109px;top:623px;width:1px;height:160px;background:#6a6a6a"></div>
<div class="ln" style="left:1185px;top:623px;width:1px;height:160px;background:#6a6a6a"></div>
<div class="ln" style="left:1266px;top:623px;width:1px;height:160px;background:#6a6a6a"></div>
<div class="ln" style="left:1348px;top:623px;width:1px;height:160px;background:#6a6a6a"></div>
<div class="ln" style="left:1426px;top:623px;width:1px;height:160px;background:#6a6a6a"></div>
<div class="ln" style="left:1514px;top:623px;width:1px;height:160px;background:#6a6a6a"></div>
<div class="ln" style="left:1608px;top:623px;width:1px;height:160px;background:#6a6a6a"></div>
<div class="ln" style="left:1704px;top:623px;width:1px;height:160px;background:#6a6a6a"></div>
<div class="ln" style="left:1807px;top:623px;width:1px;height:160px;background:#6a6a6a"></div>
<div class="ln" style="left:1891px;top:623px;width:1px;height:160px;background:#6a6a6a"></div>
<div class="ln" style="left:2020px;top:623px;width:1px;height:160px;background:#6a6a6a"></div>
<div class="ln" style="left:2202px;top:623px;width:1px;height:160px;background:#6a6a6a"></div>
<div class="ln" style="left:2379px;top:623px;width:1px;height:160px;background:#6a6a6a"></div>
<div class="t" style="top:628px;left:25px;letter-spacing:0.13px;">Advances</div>
<div class="t" style="top:628px;left:148.4px;letter-spacing:0.79px;">Animation</div>
<div class="t" style="top:628px;left:279.4px;letter-spacing:-0.43px;">Species</div>
<div class="t" style="top:628px;left:385.4px;letter-spacing:0.25px;">Shiny</div>
<div class="t" style="top:628px;left:476.6px;letter-spacing:0.02px;">Brilliant</div>
<div class="t" style="top:628px;left:581.8px;letter-spacing:-0.44px;">Level</div>
<div class="t" style="top:628px;left:668.6px;letter-spacing:0.63px;">Ability</div>
<div class="t" style="top:628px;left:766.9px;letter-spacing:0.26px;">Nature</div>
<div class="t" style="top:628px;left:867.1px;letter-spacing:0.12px;">Gender</div>
<div class="t" style="top:628px;left:972.7px;letter-spacing:-0.77px;">HP</div>
<div class="t" style="top:628px;left:1043.7px;letter-spacing:1.18px;">Atk</div>
<div class="t" style="top:628px;left:1118.5px;letter-spacing:0.67px;">Def</div>
<div class="t" style="top:628px;left:1194.6px;letter-spacing:0.26px;">SpA</div>
<div class="t" style="top:628px;left:1275.7px;letter-spacing:0.33px;">SpD</div>
<div class="t" style="top:628px;left:1357.8px;letter-spacing:0.07px;">Spe</div>
<div class="t" style="top:628px;left:1436px;letter-spacing:0.48px;">Mark</div>
<div class="t" style="top:628px;left:1523.8px;letter-spacing:-1px;">EC</div>
<div class="t" style="top:628px;left:1617.6px;letter-spacing:-0.6px;">PID</div>
<div class="t" style="top:628px;left:1713.9px;letter-spacing:0.52px;">Height</div>
<div class="t" style="top:628px;left:1816.8px;letter-spacing:0.46px;">Item</div>
<div class="t" style="top:628px;left:1900.6px;letter-spacing:0.54px;">Egg Move</div>
<div class="t" style="top:628px;left:2029.7px;letter-spacing:-0.2px;">Seed0</div>
<div class="t" style="top:628px;left:2211.7px;letter-spacing:-0.42px;">Seed1</div>
<div class="t" style="top:659px;left:20.7px;color:#000;letter-spacing:0.12px;">30,943,413</div>
<div class="t" style="top:659px;left:145.3px;color:#000;">P</div>
<div class="t" style="top:659px;left:274.6px;color:#000;letter-spacing:-0.16px;">Gastly</div>
<div class="t" style="top:659px;left:381.4px;color:#000;letter-spacing:0.02px;">Square</div>
<div class="t" style="top:657px;left:472.5px;color:#000;font-size:16.5px;font-weight:bold;">Y</div>
<div class="t" style="top:659px;left:577.5px;color:#000;letter-spacing:1.2px;">29</div>
<div class="t" style="top:659px;left:664.6px;color:#000;letter-spacing:-0.11px;">Levitate (2)</div>
<div class="t" style="top:659px;left:762.8px;color:#000;letter-spacing:-1px;">Lax</div>
<div class="t" style="top:659px;left:864.5px;color:#000;">M</div>
<div class="t" style="top:657px;left:967.6px;color:#2e8b57;font-size:16.5px;font-weight:bold;letter-spacing:1.2px;">31</div>
<div class="t" style="top:659px;left:1039.4px;color:#000;letter-spacing:1.06px;">25</div>
<div class="t" style="top:657px;left:1113.4px;color:#2e8b57;font-size:16.5px;font-weight:bold;letter-spacing:1.2px;">31</div>
<div class="t" style="top:657px;left:1189.5px;color:#2e8b57;font-size:16.5px;font-weight:bold;letter-spacing:1.2px;">31</div>
<div class="t" style="top:659px;left:1271.7px;color:#000;letter-spacing:1.06px;">14</div>
<div class="t" style="top:659px;left:1354.2px;color:#000;letter-spacing:0.36px;">13</div>
<div class="t" style="top:657px;left:1430.8px;color:#000;font-size:16.5px;font-weight:bold;letter-spacing:0.76px;">Weather</div>
<div class="t" style="top:659px;left:1519.8px;color:#000;letter-spacing:-0.02px;">084E2A87</div>
<div class="t" style="top:659px;left:1613.6px;color:#000;letter-spacing:-0.5px;">FE9DD92F</div>
<div class="t" style="top:657px;left:1708.9px;color:#000;font-size:16.5px;font-weight:bold;letter-spacing:0.88px;">XXXL (255)</div>
<div class="t" style="top:659px;left:1812.8px;color:#000;letter-spacing:0.87px;">None</div>
<div class="t" style="top:659px;left:1896.6px;color:#000;letter-spacing:-0.11px;">Toxic</div>
<div class="t" style="top:659px;left:2025.7px;color:#000;letter-spacing:-0.06px;">07C948E0A8CDD460</div>
<div class="t" style="top:659px;left:2207.8px;color:#000;letter-spacing:-0.21px;">901E4BDC28980F0A</div>
<div class="t" style="top:690px;left:20.7px;color:#000;letter-spacing:0.12px;">30,943,414</div>
<div class="t" style="top:690px;left:145.3px;color:#000;">P</div>
<div class="t" style="top:690px;left:274.6px;color:#000;letter-spacing:-0.16px;">Gastly</div>
<div class="t" style="top:690px;left:381.4px;color:#000;letter-spacing:0.02px;">Square</div>
<div class="t" style="top:688px;left:472.5px;color:#000;font-size:16.5px;font-weight:bold;">Y</div>
<div class="t" style="top:690px;left:577.5px;color:#000;letter-spacing:1.2px;">29</div>
<div class="t" style="top:690px;left:664.6px;color:#000;letter-spacing:-0.11px;">Levitate (2)</div>
<div class="t" style="top:690px;left:762.8px;color:#000;letter-spacing:-1px;">Lax</div>
<div class="t" style="top:690px;left:864.5px;color:#000;">M</div>
<div class="t" style="top:688px;left:967.6px;color:#2e8b57;font-size:16.5px;font-weight:bold;letter-spacing:1.2px;">31</div>
<div class="t" style="top:690px;left:1039.4px;color:#000;letter-spacing:1.06px;">25</div>
<div class="t" style="top:688px;left:1113.4px;color:#2e8b57;font-size:16.5px;font-weight:bold;letter-spacing:1.2px;">31</div>
<div class="t" style="top:688px;left:1189.5px;color:#2e8b57;font-size:16.5px;font-weight:bold;letter-spacing:1.2px;">31</div>
<div class="t" style="top:690px;left:1271.7px;color:#000;letter-spacing:1.06px;">14</div>
<div class="t" style="top:690px;left:1354.2px;color:#000;letter-spacing:0.36px;">13</div>
<div class="t" style="top:688px;left:1430.8px;color:#000;font-size:16.5px;font-weight:bold;letter-spacing:0.76px;">Weather</div>
<div class="t" style="top:690px;left:1519.8px;color:#000;letter-spacing:-0.02px;">084E2A87</div>
<div class="t" style="top:690px;left:1613.6px;color:#000;letter-spacing:-0.5px;">FE9DD92F</div>
<div class="t" style="top:688px;left:1708.9px;color:#000;font-size:16.5px;font-weight:bold;letter-spacing:0.88px;">XXXL (255)</div>
<div class="t" style="top:690px;left:1812.8px;color:#000;letter-spacing:0.87px;">None</div>
<div class="t" style="top:690px;left:1896.6px;color:#000;letter-spacing:-0.11px;">Toxic</div>
<div class="t" style="top:690px;left:2025.7px;color:#000;letter-spacing:-0.11px;">74434EBD3B381222</div>
<div class="t" style="top:690px;left:2207.8px;color:#000;letter-spacing:-0.16px;">0ABB6D52FAE06790</div>
<div class="t" style="top:723px;left:20.7px;color:#000;letter-spacing:0.12px;">30,943,415</div>
<div class="t" style="top:723px;left:145.3px;color:#000;">P</div>
<div class="t" style="top:723px;left:274.6px;color:#000;letter-spacing:-0.16px;">Gastly</div>
<div class="t" style="top:723px;left:381.4px;color:#000;letter-spacing:0.02px;">Square</div>
<div class="t" style="top:721px;left:472.5px;color:#000;font-size:16.5px;font-weight:bold;">Y</div>
<div class="t" style="top:723px;left:577.5px;color:#000;letter-spacing:1.2px;">29</div>
<div class="t" style="top:723px;left:664.6px;color:#000;letter-spacing:-0.11px;">Levitate (2)</div>
<div class="t" style="top:723px;left:762.8px;color:#000;letter-spacing:-1px;">Lax</div>
<div class="t" style="top:723px;left:864.5px;color:#000;">M</div>
<div class="t" style="top:721px;left:967.6px;color:#2e8b57;font-size:16.5px;font-weight:bold;letter-spacing:1.2px;">31</div>
<div class="t" style="top:723px;left:1039.4px;color:#000;letter-spacing:1.06px;">25</div>
<div class="t" style="top:721px;left:1113.4px;color:#2e8b57;font-size:16.5px;font-weight:bold;letter-spacing:1.2px;">31</div>
<div class="t" style="top:721px;left:1189.5px;color:#2e8b57;font-size:16.5px;font-weight:bold;letter-spacing:1.2px;">31</div>
<div class="t" style="top:723px;left:1271.7px;color:#000;letter-spacing:1.06px;">14</div>
<div class="t" style="top:723px;left:1354.2px;color:#000;letter-spacing:0.36px;">13</div>
<div class="t" style="top:721px;left:1430.8px;color:#000;font-size:16.5px;font-weight:bold;letter-spacing:0.76px;">Weather</div>
<div class="t" style="top:723px;left:1519.8px;color:#000;letter-spacing:-0.02px;">084E2A87</div>
<div class="t" style="top:723px;left:1613.6px;color:#000;letter-spacing:-0.5px;">FE9DD92F</div>
<div class="t" style="top:721px;left:1708.9px;color:#000;font-size:16.5px;font-weight:bold;letter-spacing:0.88px;">XXXL (255)</div>
<div class="t" style="top:723px;left:1812.8px;color:#000;letter-spacing:0.87px;">None</div>
<div class="t" style="top:723px;left:1896.6px;color:#000;letter-spacing:-0.11px;">Toxic</div>
<div class="t" style="top:723px;left:2025.7px;color:#000;letter-spacing:-0.4px;">E02CDA25961E36FC</div>
<div class="t" style="top:723px;left:2207.8px;color:#000;letter-spacing:-0.45px;">3B0EB64FDF047DF8</div>
<div class="t" style="top:756px;left:20.7px;color:#fff;letter-spacing:0.12px;">30,943,417</div>
<div class="t" style="top:756px;left:145.3px;color:#fff;">S</div>
<div class="t" style="top:756px;left:274.6px;color:#fff;letter-spacing:-0.16px;">Gastly</div>
<div class="t" style="top:756px;left:381.4px;color:#fff;letter-spacing:0.02px;">Square</div>
<div class="t" style="top:754px;left:472.5px;color:#fff;font-size:16.5px;font-weight:bold;">Y</div>
<div class="t" style="top:756px;left:577.5px;color:#fff;letter-spacing:1.2px;">29</div>
<div class="t" style="top:756px;left:664.6px;color:#fff;letter-spacing:-0.11px;">Levitate (2)</div>
<div class="t" style="top:756px;left:762.8px;color:#fff;letter-spacing:-1px;">Lax</div>
<div class="t" style="top:756px;left:864.5px;color:#fff;">M</div>
<div class="t" style="top:754px;left:967.6px;color:#fff;font-size:16.5px;font-weight:bold;letter-spacing:1.2px;">31</div>
<div class="t" style="top:756px;left:1039.4px;color:#fff;letter-spacing:1.06px;">25</div>
<div class="t" style="top:754px;left:1113.4px;color:#fff;font-size:16.5px;font-weight:bold;letter-spacing:1.2px;">31</div>
<div class="t" style="top:754px;left:1189.5px;color:#fff;font-size:16.5px;font-weight:bold;letter-spacing:1.2px;">31</div>
<div class="t" style="top:756px;left:1271.7px;color:#fff;letter-spacing:1.06px;">14</div>
<div class="t" style="top:756px;left:1354.2px;color:#fff;letter-spacing:0.36px;">13</div>
<div class="t" style="top:754px;left:1430.8px;color:#fff;font-size:16.5px;font-weight:bold;letter-spacing:0.76px;">Weather</div>
<div class="t" style="top:756px;left:1519.8px;color:#fff;letter-spacing:-0.02px;">084E2A87</div>
<div class="t" style="top:756px;left:1613.6px;color:#fff;letter-spacing:-0.5px;">FE9DD92F</div>
<div class="t" style="top:754px;left:1708.9px;color:#fff;font-size:16.5px;font-weight:bold;letter-spacing:0.88px;">XXXL (255)</div>
<div class="t" style="top:756px;left:1812.8px;color:#fff;letter-spacing:0.87px;">None</div>
<div class="t" style="top:756px;left:1896.6px;color:#fff;letter-spacing:-0.11px;">Toxic</div>
<div class="t" style="top:756px;left:2025.7px;color:#fff;letter-spacing:-0.42px;">ACB43F09AEB634AC</div>
<div class="t" style="top:756px;left:2207.8px;color:#fff;letter-spacing:-0.37px;">567D52F632EB7BB3</div>
</body></html>
